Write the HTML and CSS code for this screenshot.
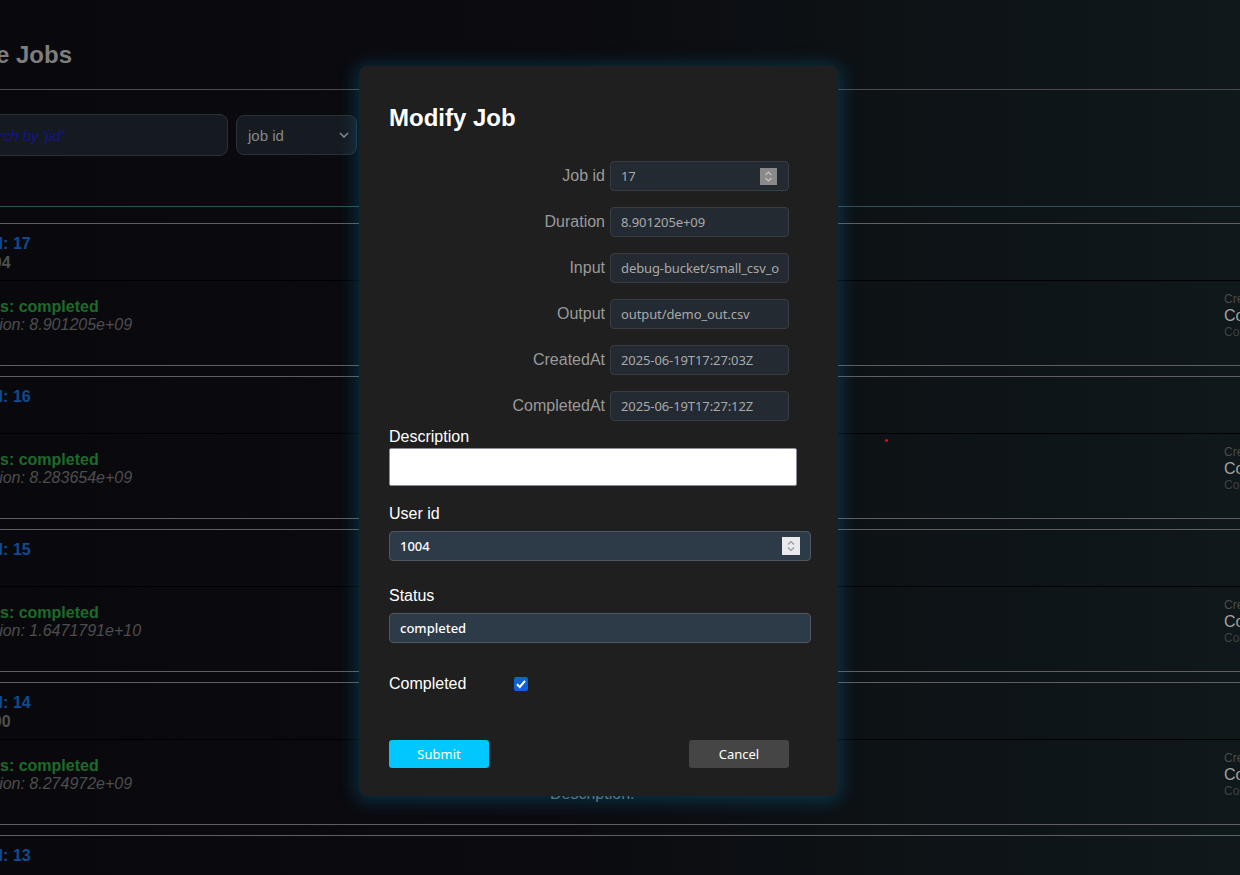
FILE: index.html
```html
<!DOCTYPE html>
<html lang="en">
<head>
<meta charset="utf-8">
<title>Jobs</title>
<link rel="stylesheet" href="styles.css">
</head>
<body>
<div class="page">
  <header class="top">
    <h1 class="title">Manage Jobs</h1>
  </header>
  <div class="search">
    <div class="search-input">Search by 'jid'</div>
    <div class="select"><span>job id</span><svg class="chev" width="10" height="6" viewBox="0 0 10 6"><path d="M1 1 L5 5 L9 1" fill="none" stroke="#8a8a8a" stroke-width="1.5"/></svg></div>
  </div>
  <div class="list">
    <div class="card">
      <div class="card-head"><div class="jid">Job id: 17</div><div class="uid">1004</div></div>
      <div class="card-body">
        <div class="col-left"><div class="status">Status: completed</div><div class="dur">Duration: 8.901205e+09</div></div>
        <div class="col-mid"><div>Input: debug-bucket/small_csv_o</div><div>Output: output/demo_out.csv</div><div>Description:</div></div>
        <div class="col-right"><div class="small">CreatedAt: 2025-06-19T17:27:03Z</div><div class="big">Completed</div><div class="small dim">CompletedAt: 2025-06-19T17:27:12Z</div></div>
      </div>
    </div>
    <div class="card">
      <div class="card-head"><div class="jid">Job id: 16</div><div class="uid"></div></div>
      <div class="card-body">
        <div class="col-left"><div class="status">Status: completed</div><div class="dur">Duration: 8.283654e+09</div></div>
        <div class="col-mid"><div>Input: debug-bucket/small_csv_o</div><div>Output: output/demo_out.csv</div><div>Description:</div></div>
        <div class="col-right"><div class="small">CreatedAt: 2025-06-19T17:12:40Z</div><div class="big">Completed</div><div class="small dim">CompletedAt: 2025-06-19T17:12:48Z</div></div>
      </div>
    </div>
    <div class="card">
      <div class="card-head"><div class="jid">Job id: 15</div><div class="uid"></div></div>
      <div class="card-body">
        <div class="col-left"><div class="status">Status: completed</div><div class="dur">Duration: 1.6471791e+10</div></div>
        <div class="col-mid"><div>Input: debug-bucket/small_csv_o</div><div>Output: output/demo_out.csv</div><div>Description:</div></div>
        <div class="col-right"><div class="small">CreatedAt: 2025-06-19T17:02:11Z</div><div class="big">Completed</div><div class="small dim">CompletedAt: 2025-06-19T17:02:27Z</div></div>
      </div>
    </div>
    <div class="card">
      <div class="card-head"><div class="jid">Job id: 14</div><div class="uid">1000</div></div>
      <div class="card-body">
        <div class="col-left"><div class="status">Status: completed</div><div class="dur">Duration: 8.274972e+09</div></div>
        <div class="col-mid"><div>Input: debug-bucket/small_csv_o</div><div>Output: output/demo_out.csv</div><div>Description:</div></div>
        <div class="col-right"><div class="small">CreatedAt: 2025-06-19T16:55:02Z</div><div class="big">Completed</div><div class="small dim">CompletedAt: 2025-06-19T16:55:10Z</div></div>
      </div>
    </div>
    <div class="card">
      <div class="card-head"><div class="jid">Job id: 13</div><div class="uid"></div></div>
    </div>
  </div>
</div>

<div class="modal">
  <h2 class="modal-title">Modify Job</h2>
  <div class="frow"><label>Job id</label><div class="field"><span class="val">17</span><span class="spin dark"><svg width="17" height="17" viewBox="0 0 17 17"><path d="M5.5 7 L8.5 4 L11.5 7 M5.5 10 L8.5 13 L11.5 10" fill="none" stroke="#c4c4c4" stroke-width="1.2"/></svg></span></div></div>
  <div class="frow"><label>Duration</label><div class="field"><span class="val">8.901205e+09</span></div></div>
  <div class="frow"><label>Input</label><div class="field"><span class="val">debug-bucket/small_csv_o</span></div></div>
  <div class="frow"><label>Output</label><div class="field"><span class="val">output/demo_out.csv</span></div></div>
  <div class="frow"><label>CreatedAt</label><div class="field"><span class="val">2025-06-19T17:27:03Z</span></div></div>
  <div class="frow last"><label>CompletedAt</label><div class="field"><span class="val">2025-06-19T17:27:12Z</span></div></div>

  <div class="blabel">Description</div>
  <div class="desc"></div>

  <div class="blabel gap">User id</div>
  <div class="wfield"><span>1004</span><span class="spin light"><svg width="18" height="18" viewBox="0 0 18 18"><path d="M6 7.5 L9 4.5 L12 7.5 M6 10.5 L9 13.5 L12 10.5" fill="none" stroke="#9a9a9a" stroke-width="1.2"/></svg></span></div>

  <div class="blabel gap2">Status</div>
  <div class="wfield"><span>completed</span></div>

  <div class="crow"><span class="clabel">Completed</span><span class="check"><svg width="14" height="14" viewBox="0 0 14 14"><path d="M3 7.2 L5.8 10 L11 3.8" fill="none" stroke="#fff" stroke-width="2"/></svg></span></div>

  <div class="buttons"><span class="btn submit">Submit</span><span class="btn cancel">Cancel</span></div>
</div>
<span class="dot"></span>
</body>
</html>
```

FILE: styles.css
```css
html, body {
  margin: 0;
  padding: 0;
}
body {
  width: 1240px;
  height: 875px;
  overflow: hidden;
  position: relative;
  background: linear-gradient(90deg, #09090d 0%, #0b0b10 45%, #0d1316 75%, #0f181b 100%);
  font-family: "Liberation Sans", Arial, sans-serif;
}
.page {
  margin-left: -40px;
  width: 1280px;
  height: 875px;
  overflow: hidden;
  padding-top: 41px;
  box-sizing: border-box;
}
.top {
  border-bottom: 1px solid #4b4b4b;
  padding-bottom: 20px;
}
.title {
  margin: 0;
  font-size: 24px;
  line-height: 28px;
  font-weight: bold;
  color: #7e7e7e;
  text-indent: -40px;
}
.search {
  display: flex;
  align-items: center;
  gap: 8px;
  margin-top: 24px;
  padding-bottom: 50px;
  border-bottom: 1px solid #2b5359;
}
.search-input {
  width: 268px;
  height: 42px;
  box-sizing: border-box;
  border: 1px solid #2a3036;
  border-radius: 8px;
  background: #151a20;
  padding-left: 10px;
  display: flex;
  align-items: center;
  font-style: italic;
  font-size: 15px;
  color: #14148c;
}
.select {
  width: 121px;
  height: 40px;
  box-sizing: border-box;
  border: 1px solid #2a3138;
  border-radius: 8px;
  background: #161b21;
  display: flex;
  align-items: center;
  justify-content: space-between;
  padding: 0 7px 0 11px;
  font-size: 15px;
  color: #868686;
}
.list {
  padding-top: 16px;
}
.card {
  border-top: 1px solid #5f5f5f;
  border-bottom: 1px solid #5f5f5f;
  margin-bottom: 10px;
}
.card-head {
  padding: 10px 0 8px;
  border-bottom: 1px solid #000;
  font-weight: bold;
  font-size: 16px;
  line-height: 19px;
}
.jid {
  color: #0f4c8f;
  margin-left: -4px;
}
.uid {
  color: #4f4f4f;
  height: 19px;
  padding-left: 15px;
}
.card-body {
  display: grid;
  grid-template-columns: 590px 674px 1fr;
  height: 84px;
  overflow: hidden;
}
.col-left {
  padding-top: 17px;
  font-size: 16px;
  line-height: 18px;
  white-space: nowrap;
}
.status {
  color: #1d6a2a;
  font-weight: bold;
}
.dur {
  color: #4d4d4d;
  font-style: italic;
}
.col-mid {
  padding-top: 9px;
  font-size: 16px;
  line-height: 18px;
  color: #66777d;
  white-space: nowrap;
}
.col-right {
  padding-top: 11px;
  white-space: nowrap;
}
.small {
  font-size: 12px;
  line-height: 15px;
  color: #4c4c4c;
}
.small.dim {
  color: #3f4244;
}
.big {
  font-size: 16px;
  line-height: 18px;
  color: #a3a3a3;
}

.modal {
  position: absolute;
  left: 359px;
  top: 66px;
  width: 479px;
  box-sizing: border-box;
  padding: 38px 30px 28px;
  background: #1f1f1f;
  border-radius: 8px;
  box-shadow: 0 2px 18px 3px rgba(0, 140, 190, 0.3);
}
.modal-title {
  margin: 0 0 29px;
  font-size: 24px;
  line-height: 28px;
  font-weight: bold;
  color: #ffffff;
}
.frow {
  display: flex;
  align-items: center;
  margin-bottom: 16px;
}
.frow.last {
  margin-bottom: 7px;
}
.frow label {
  width: 216px;
  margin-right: 5px;
  text-align: right;
  font-size: 16px;
  line-height: 18px;
  color: #9a9a9a;
}
.field {
  width: 179px;
  height: 30px;
  box-sizing: border-box;
  border: 1px solid #383d44;
  border-radius: 4px;
  background: #242a32;
  display: flex;
  align-items: center;
  padding: 0 11px 0 10px;
  font-family: "Noto Sans", sans-serif;
  font-size: 13px;
  letter-spacing: -0.1px;
  color: #a9a9a9;
  white-space: nowrap;
  overflow: hidden;
}
.val {
  flex: 1;
  min-width: 0;
}
.spin {
  margin-left: auto;
  display: flex;
  flex: none;
}
.spin.dark {
  width: 17px;
  height: 17px;
  background: #8a8a8a;
}
.spin.light {
  width: 18px;
  height: 18px;
  background: #e9e9ee;
}
.blabel {
  font-size: 16px;
  line-height: 18px;
  color: #ffffff;
}
.blabel.gap {
  margin-top: 19px;
}
.blabel.gap2 {
  margin-top: 26px;
}
.desc {
  margin-top: 2px;
  width: 408px;
  height: 38px;
  box-sizing: border-box;
  background: #ffffff;
  border: 1px solid #8b8b99;
  border-radius: 2px;
}
.wfield {
  margin-top: 8px;
  width: 422px;
  height: 30px;
  box-sizing: border-box;
  border: 1px solid #50575f;
  border-radius: 4px;
  background: #2d3a48;
  display: flex;
  align-items: center;
  padding: 0 10px;
  font-family: "Noto Sans", sans-serif;
  font-size: 13px;
  font-weight: 500;
  color: #ffffff;
}
.crow {
  margin-top: 32px;
  display: flex;
  align-items: center;
  height: 18px;
}
.clabel {
  width: 125px;
  font-size: 16px;
  color: #ffffff;
}
.check {
  width: 14px;
  height: 14px;
  border-radius: 2px;
  background: #0d62d8;
  display: flex;
}
.buttons {
  margin-top: 47px;
  width: 400px;
  display: flex;
  justify-content: space-between;
}
.btn {
  width: 100px;
  height: 28px;
  border-radius: 3px;
  display: flex;
  align-items: center;
  justify-content: center;
  font-family: "Noto Sans", sans-serif;
  font-size: 13px;
  color: #ffffff;
}
.submit {
  background: #00c8ff;
}
.cancel {
  background: #454545;
}
.dot {
  position: absolute;
  left: 885px;
  top: 439px;
  width: 3px;
  height: 3px;
  border-radius: 50%;
  background: #e01010;
}
```
